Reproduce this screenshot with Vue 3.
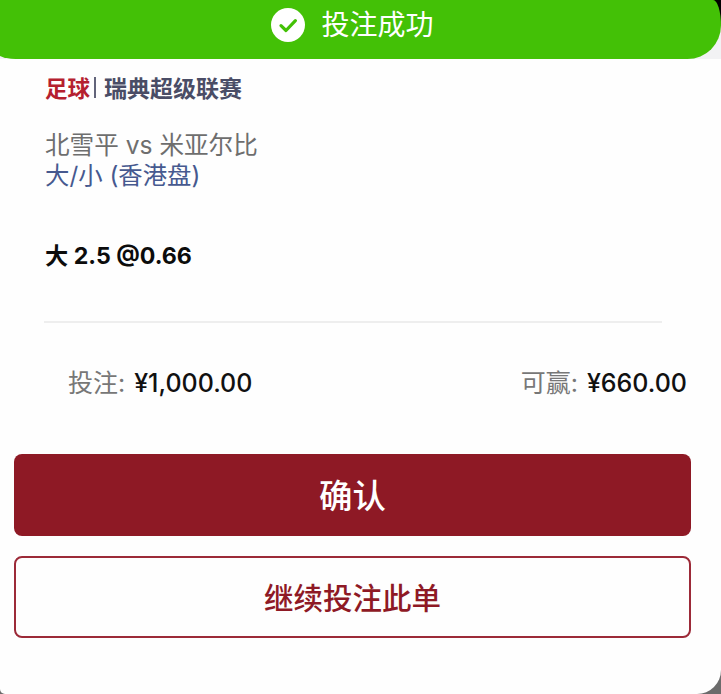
<script setup>
const amounts = [
  { label: '投注:', value: '¥1,000.00' },
  { label: '可赢:', value: '¥660.00' }
]
</script>

<template>
  <div class="page">
    <div class="sheet">
      <div class="banner-wrap">
        <div class="banner">
          <svg class="tick" viewBox="0 0 34 34" aria-hidden="true">
            <circle cx="17" cy="17" r="17" fill="#fff" />
            <path d="M10 17.6l5 4.9L24.4 12.6" fill="none" stroke="#43c106" stroke-width="3.2" stroke-linecap="round" stroke-linejoin="round" />
          </svg>
          <span class="banner-text">投注成功</span>
        </div>
      </div>

      <div class="details">
        <div class="league">
          <span class="sport">足球</span><span class="sep"></span><span class="league-name">瑞典超级联赛</span>
        </div>
        <div class="teams">北雪平 vs 米亚尔比</div>
        <div class="market">大/小 (香港盘)</div>
        <div class="pick">大 2.5 @0.66</div>
        <div class="rule"></div>
      </div>

      <div class="amounts">
        <div v-for="a in amounts" :key="a.label" class="amount">
          <span class="label">{{ a.label }}</span>
          <span class="value">{{ a.value }}</span>
        </div>
      </div>

      <div class="actions">
        <button class="btn primary">确认</button>
        <button class="btn outline">继续投注此单</button>
      </div>
    </div>
  </div>
</template>

<style>
html, body { margin: 0; background: #6b6b6b; }
</style>

<style scoped>
.page {
  width: 721px;
  height: 694px;
  overflow: hidden;
  font-family: Inter, "Noto Sans CJK SC", sans-serif;
}
.sheet {
  height: 694px;
  background: #fefefe;
  border-radius: 0 0 24px 5px;
  overflow: hidden;
}
.banner-wrap {
  background: linear-gradient(#000 0 26px, #f2f2f4 26px);
}
.banner {
  height: 59px;
  margin-left: -8px;
  background: #43c106;
  border-radius: 0 8px 34px 24px / 0 26px 34px 12px;
  display: flex;
  align-items: center;
  justify-content: center;
  gap: 16px;
  padding-right: 10px;
  padding-bottom: 10px;
  box-sizing: border-box;
}
.tick { width: 34px; height: 34px; flex: none; margin-left: 2px; }
.banner-text { color: #fff; font-size: 28px; line-height: 34px; font-weight: 400; }
.details { padding: 13px 59px 0 45px; }
.league { display: flex; align-items: center; height: 30px; font-size: 23px; font-weight: 700; }
.sport { color: #b5202f; font-size: 22.5px; }
.sep { width: 2px; height: 21px; background: #62647a; margin: 0 8px 0 4px; }
.league-name { color: #4a4d66; }
.teams { margin-top: 27px; font-size: 24.6px; line-height: 32px; color: #6e6e6e; }
.market { margin-top: -1px; font-size: 24.4px; line-height: 30px; color: #46598f; }
.pick { margin-top: 50px; font-size: 23.2px; line-height: 32px; font-weight: 700; color: #0c0c0c; }
.rule { margin-top: 49px; margin-left: -1px; height: 2px; background: #eeeeee; }
.amounts {
  margin-top: 44px;
  padding: 0 34px 0 68px;
  display: flex;
  justify-content: space-between;
  font-size: 25px;
  line-height: 32px;
}
.amount { display: flex; gap: 9px; }
.label { color: #777; }
.value { color: #111; font-weight: 500; }
.actions { margin-top: 55px; padding: 0 30px 0 14px; display: flex; flex-direction: column; gap: 20px; }
.btn { display: block; width: 100%; height: 82px; border-radius: 8px; font-family: inherit; cursor: pointer; padding: 0; }
.primary { background: #8e1925; border: none; color: #fff; font-size: 33.5px; font-weight: 500; padding-bottom: 4px; }
.outline { background: #fefefe; border: 2px solid #9c2a38; color: #8e1925; font-size: 29.5px; font-weight: 500; padding-bottom: 2px; }
</style>
